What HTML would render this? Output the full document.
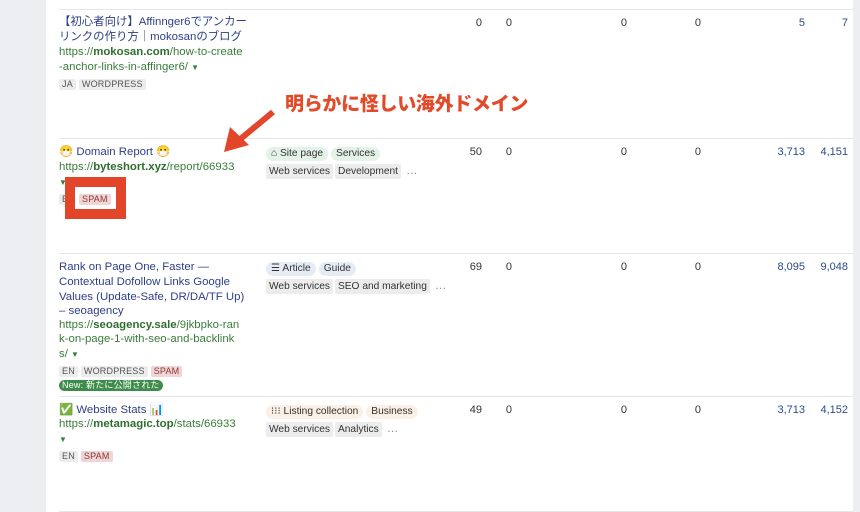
<!DOCTYPE html>
<html><head><meta charset="utf-8"><style>
*{margin:0;padding:0;box-sizing:border-box}
body{width:860px;height:512px;overflow:hidden;background:#fff;font-family:"Liberation Sans","Noto Sans CJK JP",sans-serif;font-size:11.4px;position:relative;color:#333}
.gl{position:absolute;left:0;top:0;width:46px;height:512px;background:#eceef1}
.gr{position:absolute;right:0;top:0;width:7px;height:512px;background:#eceef1}
.ln{position:absolute;left:59px;right:7px;height:1px;background:#e4e6ea}
.a{position:absolute;white-space:nowrap;line-height:15px}
.t{color:#2d3f86}
.u{color:#3a7d3a}
.u b{color:#2f6e2f}
.tag{display:inline-block;background:#ececec;color:#555;font-size:9px;padding:0 3px;line-height:11px;border-radius:2px;margin-right:3px;letter-spacing:.2px}
.sp{background:#f1d4d4;color:#8a3a3a}
.pill{display:inline-block;border-radius:7px;padding:0 5px;line-height:14px;font-size:10.2px;margin-right:3px;color:#333}
.sq{display:inline-block;background:#ececec;padding:0 3px;line-height:15px;font-size:10.2px;margin-right:2px;border-radius:2px;color:#333}
.n{position:absolute;font-size:11px;color:#333;text-align:right;width:40px}
.b{color:#2d4a8a}
</style></head><body>
<div class="gl"></div><div class="gr"></div>
<div class="ln" style="top:9px"></div>
<div class="ln" style="top:138px"></div>
<div class="ln" style="top:253px"></div>
<div class="ln" style="top:396px"></div>
<div class="ln" style="top:511px"></div>

<!-- row1 -->
<div class="a t" style="left:59px;top:15px">【初心者向け】Affinnger6でアンカー</div>
<div class="a t" style="left:59px;top:30px">リンクの作り方｜mokosanのブログ</div>
<div class="a u" style="left:59px;top:45px">https://<b>mokosan.com</b>/how-to-create</div>
<div class="a u" style="left:59px;top:60px">-anchor-links-in-affinger6/ <span style="font-size:8px">▼</span></div>
<div class="a" style="left:59px;top:77px"><span class="tag">JA</span><span class="tag">WORDPRESS</span></div>
<div class="n" style="left:442px;top:17px">0</div>
<div class="n" style="left:472px;top:17px">0</div>
<div class="n" style="left:587px;top:17px">0</div>
<div class="n" style="left:661px;top:17px">0</div>
<div class="n b" style="left:765px;top:17px">5</div>
<div class="n b" style="left:808px;top:17px">7</div>

<!-- annotation -->
<div class="a" style="left:285px;top:91px;font-size:19px;font-weight:900;color:#e24a2a;line-height:24px;font-family:'Noto Sans CJK JP',sans-serif;letter-spacing:-.3px">明らかに怪しい海外ドメイン</div>
<svg style="position:absolute;left:220px;top:106px" width="60" height="52"><line x1="53" y1="6" x2="18" y2="35" stroke="#e2452a" stroke-width="6"/><polygon points="4,46 10,21 29,39" fill="#e2452a"/></svg>

<!-- row2 -->
<div class="a t" style="left:59px;top:145px">😷 Domain Report 😷</div>
<div class="a u" style="left:59px;top:160px">https://<b>byteshort.xyz</b>/report/66933</div>
<div class="a u" style="left:59px;top:175px;font-size:8px">▼</div>
<div class="a" style="left:59px;top:192px"><span class="tag">EN</span><span class="tag sp">SPAM</span></div>
<div style="position:absolute;left:65px;top:177px;width:61px;height:42px;border:10px solid #e2452a;background:transparent"></div>
<div style="position:absolute;left:75px;top:187px;width:41px;height:22px;background:#fff"></div>
<div class="a" style="left:79px;top:192px"><span class="tag sp">SPAM</span></div>
<div class="a" style="left:266px;top:146px"><span class="pill" style="background:#e4f2e8">⌂ Site page</span><span class="pill" style="background:#e4f2e8">Services</span></div>
<div class="a" style="left:266px;top:164px"><span class="sq">Web services</span><span class="sq">Development</span> <span style="color:#888">…</span></div>
<div class="n" style="left:442px;top:146px">50</div>
<div class="n" style="left:472px;top:146px">0</div>
<div class="n" style="left:587px;top:146px">0</div>
<div class="n" style="left:661px;top:146px">0</div>
<div class="n b" style="left:765px;top:146px">3,713</div>
<div class="n b" style="left:808px;top:146px">4,151</div>

<!-- row3 -->
<div class="a t" style="left:59px;top:260px">Rank on Page One, Faster —</div>
<div class="a t" style="left:59px;top:275px">Contextual Dofollow Links Google</div>
<div class="a t" style="left:59px;top:290px">Values (Update-Safe, DR/DA/TF Up)</div>
<div class="a t" style="left:59px;top:304px">– seoagency</div>
<div class="a u" style="left:59px;top:318px">https://<b>seoagency.sale</b>/9jkbpko-ran</div>
<div class="a u" style="left:59px;top:332px">k-on-page-1-with-seo-and-backlink</div>
<div class="a u" style="left:59px;top:347px">s/ <span style="font-size:8px">▼</span></div>
<div class="a" style="left:59px;top:364px"><span class="tag">EN</span><span class="tag">WORDPRESS</span><span class="tag sp">SPAM</span></div>
<div class="a" style="left:59px;top:378px"><span class="tag" style="background:#3d8c4a;color:#fff;border-radius:6px">New: 新たに公開された</span></div>
<div class="a" style="left:266px;top:261px"><span class="pill" style="background:#e6ecf6">☰ Article</span><span class="pill" style="background:#e6ecf6">Guide</span></div>
<div class="a" style="left:266px;top:279px"><span class="sq">Web services</span><span class="sq">SEO and marketing</span> <span style="color:#888">…</span></div>
<div class="n" style="left:442px;top:261px">69</div>
<div class="n" style="left:472px;top:261px">0</div>
<div class="n" style="left:587px;top:261px">0</div>
<div class="n" style="left:661px;top:261px">0</div>
<div class="n b" style="left:765px;top:261px">8,095</div>
<div class="n b" style="left:808px;top:261px">9,048</div>

<!-- row4 -->
<div class="a t" style="left:59px;top:403px"><span style="color:#3a9a3a">✅</span> Website Stats 📊</div>
<div class="a u" style="left:59px;top:417px">https://<b>metamagic.top</b>/stats/66933</div>
<div class="a u" style="left:59px;top:432px;font-size:8px">▼</div>
<div class="a" style="left:59px;top:449px"><span class="tag">EN</span><span class="tag sp">SPAM</span></div>
<div class="a" style="left:266px;top:404px"><span class="pill" style="background:#fbf0e4">⁝⁝⁝ Listing collection</span><span class="pill" style="background:#fbf0e4">Business</span></div>
<div class="a" style="left:266px;top:422px"><span class="sq">Web services</span><span class="sq">Analytics</span> <span style="color:#888">…</span></div>
<div class="n" style="left:442px;top:404px">49</div>
<div class="n" style="left:472px;top:404px">0</div>
<div class="n" style="left:587px;top:404px">0</div>
<div class="n" style="left:661px;top:404px">0</div>
<div class="n b" style="left:765px;top:404px">3,713</div>
<div class="n b" style="left:808px;top:404px">4,152</div>
</body></html>
